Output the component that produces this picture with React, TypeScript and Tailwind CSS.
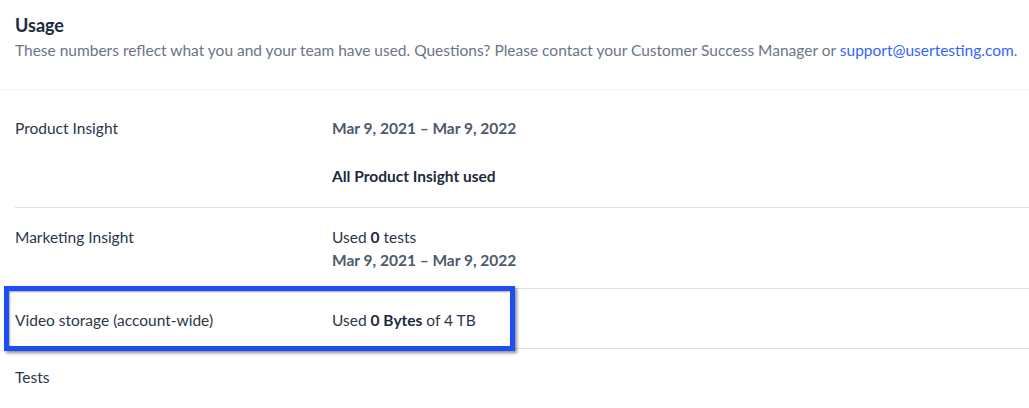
import React from "react";

const font = { fontFamily: "Lato, 'Open Sans', sans-serif" };

function Row({
  label,
  children,
  className = "",
}: {
  label: string;
  children?: React.ReactNode;
  className?: string;
}) {
  return (
    <div className={`flex border-t border-[#dedfe1] ${className}`}>
      <div className="w-[317px] shrink-0 text-[15.5px] leading-[22px] text-[#2a3747]">{label}</div>
      <div className="flex-1 text-[15.5px] leading-[22px] text-[#2a3747]">{children}</div>
    </div>
  );
}

export default function App() {
  return (
    <div className="w-[1029px] h-[408px] overflow-hidden bg-white" style={font}>
      <div className="px-[15px] pt-[14px] pb-[28px]">
        <h2 className="text-[18px] leading-[22px] font-bold text-[#1c2a3c]">Usage</h2>
        <p className="mt-[3px] text-[15.5px] leading-[22px] text-[#6b7585] whitespace-nowrap">
          These numbers reflect what you and your team have used. Questions? Please contact your Customer Success
          Manager or <a className="text-[#3166ff]">support@usertesting.com</a>.
        </p>
      </div>
      <div className="border-t border-[#f1f1f2] pl-[15px]">
        <div className="flex pt-[27px] pb-[20px]">
          <div className="w-[317px] shrink-0 text-[15.5px] leading-[22px] text-[#2a3747]">Product Insight</div>
          <div className="flex-1 text-[15.5px] leading-[22px]">
            <div className="font-bold text-[#4d5a6b]">Mar 9, 2021 – Mar 9, 2022</div>
            <div className="mt-[26px] font-bold text-[#1c2a3c]">All Product Insight used</div>
          </div>
        </div>
        <Row label="Marketing Insight" className="pt-[18px] pb-[17px]">
          <div>
            Used <span className="font-bold text-[#1c2a3c]">0</span> tests
          </div>
          <div className="mt-[1px] font-bold text-[#4d5a6b]">Mar 9, 2021 – Mar 9, 2022</div>
        </Row>
        <div className="relative">
          <Row label="Video storage (account-wide)" className="pt-[20px] pb-[17px]">
            Used <span className="font-bold text-[#1c2a3c]">0 Bytes</span> of 4 TB
          </Row>
          {/* highlight frame around the storage row */}
          <div className="pointer-events-none absolute left-[-11px] top-[-2px] w-[511px] h-[65px] border-[5px] border-[#1c4df5] shadow-[2px_2px_3px_rgba(0,0,0,0.45),inset_1px_1px_2px_rgba(0,0,0,0.35)]" />
        </div>
        <Row label="Tests" className="pt-[17px] pb-[20px]" />
      </div>
    </div>
  );
}
